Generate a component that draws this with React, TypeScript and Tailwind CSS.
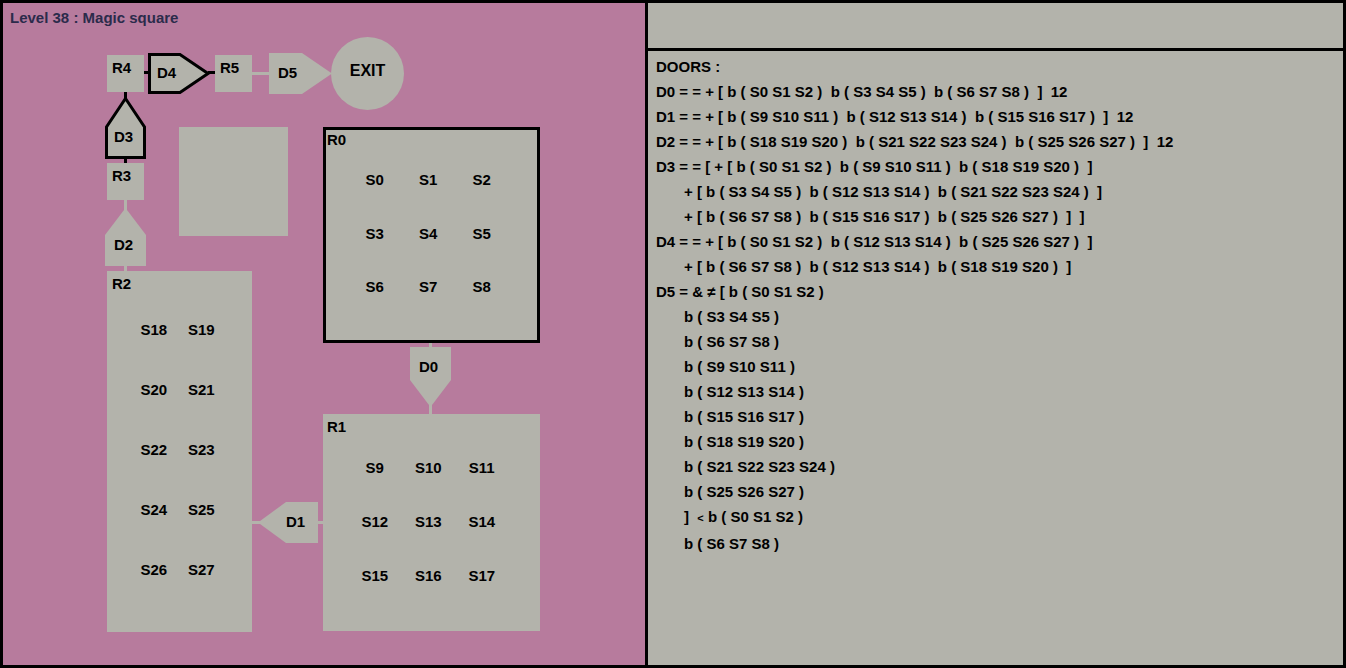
import React from "react"

// 左パネル：迷路の図 / 右パネル：ドアの条件
const S_R0 = ["S0", "S1", "S2", "S3", "S4", "S5", "S6", "S7", "S8"]
const S_R1 = ["S9", "S10", "S11", "S12", "S13", "S14", "S15", "S16", "S17"]
const S_R2 = ["S18", "S19", "S20", "S21", "S22", "S23", "S24", "S25", "S26", "S27"]

const LINES: { text: string; indent?: boolean }[] = [
  { text: "DOORS :" },
  { text: "D0 = = + [ b ( S0 S1 S2 )  b ( S3 S4 S5 )  b ( S6 S7 S8 )  ]  12" },
  { text: "D1 = = + [ b ( S9 S10 S11 )  b ( S12 S13 S14 )  b ( S15 S16 S17 )  ]  12" },
  { text: "D2 = = + [ b ( S18 S19 S20 )  b ( S21 S22 S23 S24 )  b ( S25 S26 S27 )  ]  12" },
  { text: "D3 = = [ + [ b ( S0 S1 S2 )  b ( S9 S10 S11 )  b ( S18 S19 S20 )  ]" },
  { text: "+ [ b ( S3 S4 S5 )  b ( S12 S13 S14 )  b ( S21 S22 S23 S24 )  ]", indent: true },
  { text: "+ [ b ( S6 S7 S8 )  b ( S15 S16 S17 )  b ( S25 S26 S27 )  ]  ]", indent: true },
  { text: "D4 = = + [ b ( S0 S1 S2 )  b ( S12 S13 S14 )  b ( S25 S26 S27 )  ]" },
  { text: "+ [ b ( S6 S7 S8 )  b ( S12 S13 S14 )  b ( S18 S19 S20 )  ]", indent: true },
  { text: "D5 = & ≠ [ b ( S0 S1 S2 )" },
  { text: "b ( S3 S4 S5 )", indent: true },
  { text: "b ( S6 S7 S8 )", indent: true },
  { text: "b ( S9 S10 S11 )", indent: true },
  { text: "b ( S12 S13 S14 )", indent: true },
  { text: "b ( S15 S16 S17 )", indent: true },
  { text: "b ( S18 S19 S20 )", indent: true },
  { text: "b ( S21 S22 S23 S24 )", indent: true },
  { text: "b ( S25 S26 S27 )", indent: true },
  { text: "LT", indent: true }, // "]  < b ( S0 S1 S2 )" は下で個別に描く
  { text: "b ( S6 S7 S8 )", indent: true },
]

type DoorProps = {
  className: string
  w: number
  h: number
  points: string
  bordered?: boolean
  label: string
  labelClass: string
}

function Door({ className, w, h, points, bordered, label, labelClass }: DoorProps) {
  return (
    <div className={`absolute ${className}`}>
      <svg className="absolute inset-0" width={w} height={h} viewBox={`0 0 ${w} ${h}`}>
        <polygon
          points={points}
          fill="#b3b3ab"
          stroke={bordered ? "#000" : "none"}
          strokeWidth={bordered ? 3 : 0}
          strokeLinejoin="miter"
        />
      </svg>
      <span className={`absolute leading-none ${labelClass}`}>{label}</span>
    </div>
  )
}

function Slots({ names, className }: { names: string[]; className: string }) {
  return (
    <div className={className}>
      {names.map((n) => (
        <div key={n} className="flex items-center justify-center leading-none">
          {n}
        </div>
      ))}
    </div>
  )
}

export default function App() {
  return (
    <div className="w-[1346px] h-[668px] bg-black p-[3px] flex gap-[3px] font-['Liberation_Sans',Arial,sans-serif] font-bold text-[15px] text-black">
      {/* 図のキャンバス */}
      <div className="relative w-[642px] h-full shrink-0 bg-[#b77b9d] overflow-hidden">
        <div className="absolute left-[7px] top-[7px] leading-none text-[#2b2b4b]">Level 38 : Magic square</div>

        {/* 接続線 */}
        <div className="absolute left-[141px] top-[68px] w-[6px] h-[3px] bg-black" />
        <div className="absolute left-[205px] top-[68px] w-[8px] h-[3px] bg-black" />
        <div className="absolute left-[249px] top-[69px] w-[19px] h-[3px] bg-[#b3b3ab]" />
        <div className="absolute left-[121px] top-[88px] w-[3px] h-[8px] bg-black" />
        <div className="absolute left-[121px] top-[154px] w-[3px] h-[7px] bg-black" />
        <div className="absolute left-[121px] top-[196px] w-[3px] h-[11px] bg-[#b3b3ab]" />
        <div className="absolute left-[121px] top-[261px] w-[3px] h-[8px] bg-[#b3b3ab]" />
        <div className="absolute left-[426px] top-[339px] w-[3px] h-[7px] bg-[#b3b3ab]" />
        <div className="absolute left-[426px] top-[402px] w-[3px] h-[10px] bg-[#b3b3ab]" />
        <div className="absolute left-[249px] top-[518px] w-[8px] h-[3px] bg-[#b3b3ab]" />
        <div className="absolute left-[313px] top-[518px] w-[8px] h-[3px] bg-[#b3b3ab]" />

        {/* 部屋 */}
        <div className="absolute left-[104px] top-[52px] w-[37px] h-[37px] bg-[#b3b3ab]">
          <span className="absolute left-[5px] top-[5px] leading-none">R4</span>
        </div>
        <div className="absolute left-[212px] top-[52px] w-[37px] h-[37px] bg-[#b3b3ab]">
          <span className="absolute left-[5px] top-[5px] leading-none">R5</span>
        </div>
        <div className="absolute left-[104px] top-[160px] w-[37px] h-[37px] bg-[#b3b3ab]">
          <span className="absolute left-[5px] top-[5px] leading-none">R3</span>
        </div>
        <div className="absolute left-[176px] top-[124px] w-[109px] h-[109px] bg-[#b3b3ab]" />

        <div className="absolute left-[320px] top-[124px] w-[217px] h-[216px] border-[3px] border-black bg-[#b3b3ab] pl-[22px] pt-[23px]">
          <span className="absolute left-[1px] top-[2px] leading-none">R0</span>
          <Slots names={S_R0} className="grid grid-cols-[repeat(3,53.5px)] auto-rows-[53.5px]" />
        </div>

        <div className="absolute left-[320px] top-[411px] w-[217px] h-[217px] bg-[#b3b3ab] pl-[25px] pt-[26px]">
          <span className="absolute left-[4px] top-[5px] leading-none">R1</span>
          <Slots names={S_R1} className="grid grid-cols-[repeat(3,53.5px)] auto-rows-[54px]" />
        </div>

        <div className="absolute left-[104px] top-[268px] w-[145px] h-[361px] bg-[#b3b3ab] pl-[23px] pt-[28px]">
          <span className="absolute left-[5px] top-[5px] leading-none">R2</span>
          <Slots names={S_R2} className="grid grid-cols-[repeat(2,47.5px)] auto-rows-[60px]" />
        </div>

        {/* ドア */}
        <Door
          className="left-[145px] top-[50px] w-[62px] h-[41px]"
          w={62}
          h={41}
          points="1.5,1.5 32,1.5 60,20.5 32,39.5 1.5,39.5"
          bordered
          label="D4"
          labelClass="left-[9px] top-[12px]"
        />
        <Door
          className="left-[266px] top-[50px] w-[63px] h-[41px]"
          w={63}
          h={41}
          points="0,0 33,0 63,20.5 33,41 0,41"
          label="D5"
          labelClass="left-[9px] top-[12px]"
        />
        <Door
          className="left-[102px] top-[94px] w-[41px] h-[62px]"
          w={41}
          h={62}
          points="20.5,1.5 39.5,30 39.5,60.5 1.5,60.5 1.5,30"
          bordered
          label="D3"
          labelClass="left-[9px] top-[32px]"
        />
        <Door
          className="left-[102px] top-[205px] w-[41px] h-[58px]"
          w={41}
          h={58}
          points="20.5,0 41,27 41,58 0,58 0,27"
          label="D2"
          labelClass="left-[9px] top-[29px]"
        />
        <Door
          className="left-[407px] top-[344px] w-[41px] h-[60px]"
          w={41}
          h={60}
          points="0,0 41,0 41,33 20.5,60 0,33"
          label="D0"
          labelClass="left-[9px] top-[12px]"
        />
        <Door
          className="left-[255px] top-[499px] w-[60px] h-[41px]"
          w={60}
          h={41}
          points="0,20.5 28,0 60,0 60,41 28,41"
          label="D1"
          labelClass="left-[28px] top-[12px]"
        />

        {/* 出口 */}
        <div className="absolute left-[328px] top-[34px] w-[73px] h-[73px] rounded-full bg-[#b3b3ab] flex items-center justify-center pb-[5px] text-[16px] leading-none">
          EXIT
        </div>
      </div>

      {/* 右パネル */}
      <div className="flex-1 flex flex-col gap-[3px]">
        <div className="h-[45px] bg-[#b3b3ab]" />
        <div className="flex-1 bg-[#b3b3ab] pl-[8px] pt-[3px] leading-[25px]">
          {LINES.map((l, i) =>
            l.text === "LT" ? (
              <div key={i} className="whitespace-pre pl-[28px]">
                {"]  "}
                <span className="text-[11px]">{"<"}</span>
                {" b ( S0 S1 S2 )"}
              </div>
            ) : (
              <div key={i} className={`whitespace-pre ${l.indent ? "pl-[28px]" : ""}`}>
                {l.text}
              </div>
            )
          )}
        </div>
      </div>
    </div>
  )
}
